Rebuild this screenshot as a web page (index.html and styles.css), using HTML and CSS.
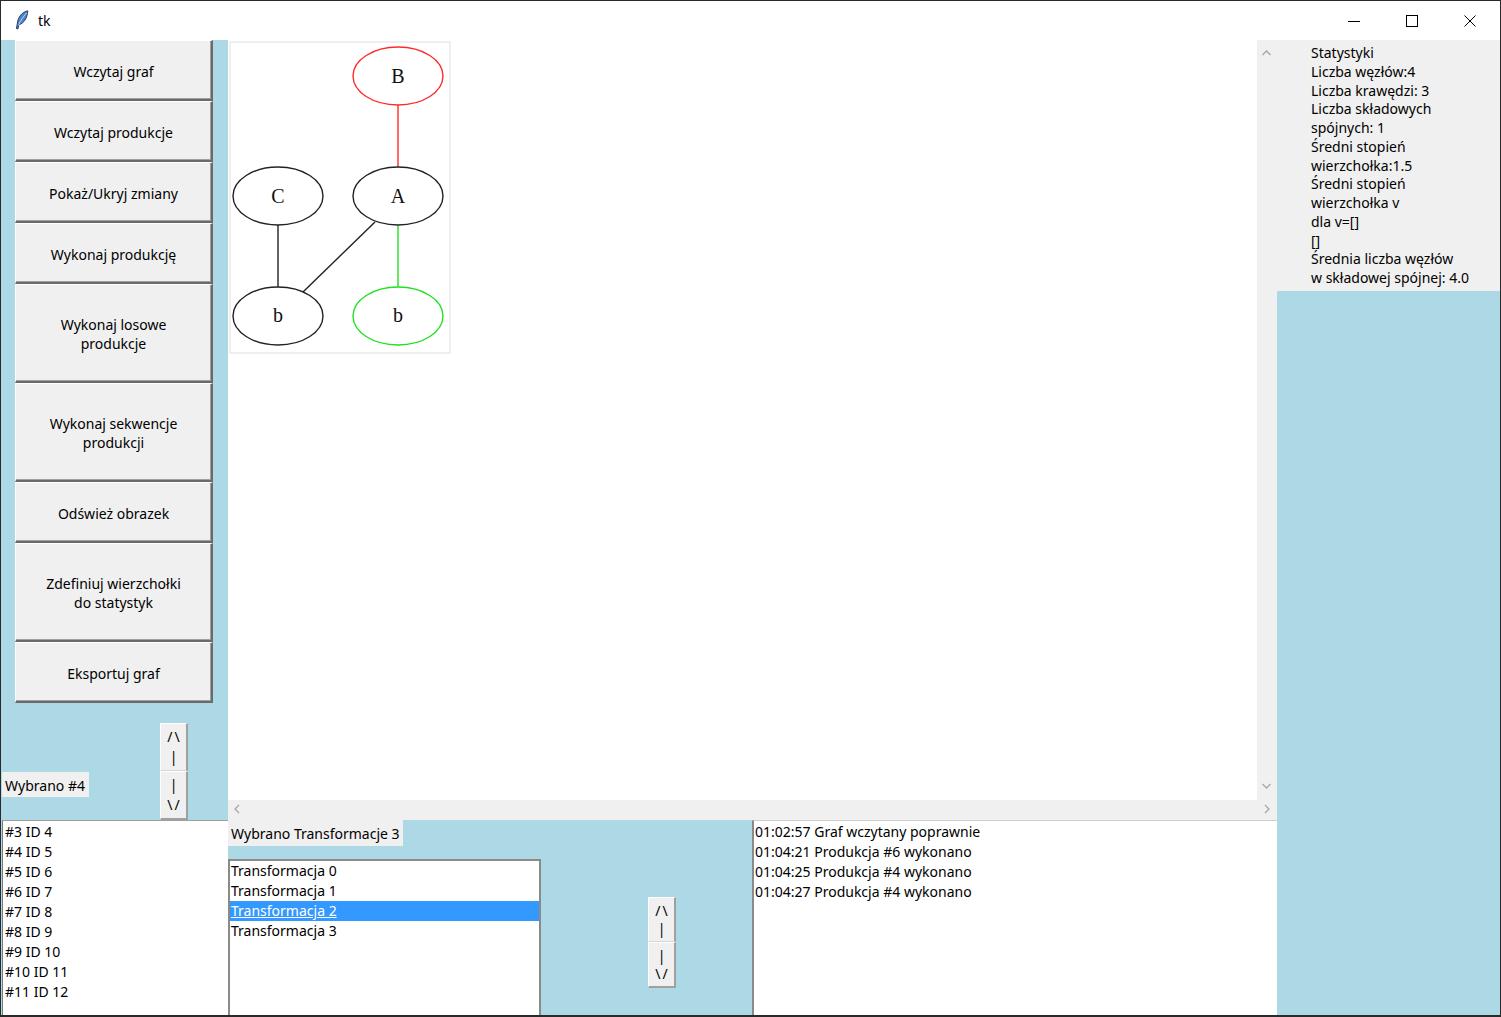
FILE: index.html
```html
<!DOCTYPE html>
<html lang="pl">
<head>
<meta charset="utf-8">
<title>tk</title>
<link rel="stylesheet" href="styles.css">
</head>
<body>
<div class="window">
  <div class="titlebar">
    <svg class="tk-icon" width="14" height="20" viewBox="0 0 14 20">
      <path d="M12.8 0.8 C7 2 3 7 2.4 13 L1.4 18.6 L3 18.9 L3.7 15 C9.2 13 12.4 8 12.8 0.8 Z" fill="#4a82cc" stroke="#23355a" stroke-width="0.9"/>
      <path d="M11.6 3 C8 7 5.5 10.5 3.4 15.5" fill="none" stroke="#d3e3f7" stroke-width="0.8"/>
    </svg>
    <span class="title">tk</span>
    <div class="controls">
      <svg class="ctl" width="58" height="40" viewBox="0 0 58 40"><path d="M23 20.5 H35" stroke="#000" stroke-width="1"/></svg>
      <svg class="ctl" width="58" height="40" viewBox="0 0 58 40"><rect x="23.5" y="14.5" width="11" height="11" fill="none" stroke="#000" stroke-width="1"/></svg>
      <svg class="ctl" width="58" height="40" viewBox="0 0 58 40"><path d="M23.5 14.5 L34.5 25.5 M34.5 14.5 L23.5 25.5" stroke="#000" stroke-width="1"/></svg>
    </div>
  </div>
  <div class="main">
    <div class="col-left">
      <div class="left-top">
        <div class="buttons">
          <div class="btn">Wczytaj graf</div>
          <div class="btn">Wczytaj produkcje</div>
          <div class="btn">Pokaż/Ukryj zmiany</div>
          <div class="btn">Wykonaj produkcję</div>
          <div class="btn tall">Wykonaj losowe<br>produkcje</div>
          <div class="btn tall">Wykonaj sekwencje<br>produkcji</div>
          <div class="btn">Odśwież obrazek</div>
          <div class="btn tall">Zdefiniuj wierzchołki<br>do statystyk</div>
          <div class="btn">Eksportuj graf</div>
        </div>
        <div class="left-ctrl">
          <div class="label label-left">Wybrano #4</div>
          <div class="spin spin-left">
            <div class="spin-btn"><span class="arr">/\</span><span>|</span></div>
            <div class="spin-btn"><span>|</span><span class="arr">\/</span></div>
          </div>
        </div>
      </div>
      <div class="listbox list-left">
        <div class="item">#3 ID 4</div>
        <div class="item">#4 ID 5</div>
        <div class="item">#5 ID 6</div>
        <div class="item">#6 ID 7</div>
        <div class="item">#7 ID 8</div>
        <div class="item">#8 ID 9</div>
        <div class="item">#9 ID 10</div>
        <div class="item">#10 ID 11</div>
        <div class="item">#11 ID 12</div>
      </div>
    </div>
    <div class="col-mid">
      <div class="canvas-area">
        <div class="canvas-row">
          <div class="canvas">
            <svg class="graph" width="222" height="313" viewBox="0 0 222 313">
              <rect x="1" y="1" width="220" height="311" fill="#fff" stroke="#efefef" stroke-width="2"/>
              <line x1="169" y1="64" x2="169" y2="126" stroke="#ff2a2a" stroke-width="1.4"/>
              <line x1="169" y1="184" x2="169" y2="246" stroke="#22e022" stroke-width="1.4"/>
              <line x1="49" y1="184" x2="49" y2="246" stroke="#222" stroke-width="1.4"/>
              <line x1="146" y1="181" x2="74" y2="251" stroke="#222" stroke-width="1.4"/>
              <ellipse cx="169" cy="35" rx="45" ry="29" fill="#fff" stroke="#ff2a2a" stroke-width="1.4"/>
              <ellipse cx="169" cy="155" rx="45" ry="29" fill="#fff" stroke="#222" stroke-width="1.4"/>
              <ellipse cx="49" cy="155" rx="45" ry="29" fill="#fff" stroke="#222" stroke-width="1.4"/>
              <ellipse cx="49" cy="275" rx="45" ry="29" fill="#fff" stroke="#222" stroke-width="1.4"/>
              <ellipse cx="169" cy="275" rx="45" ry="29" fill="#fff" stroke="#22e022" stroke-width="1.4"/>
              <text x="169" y="42" class="node">B</text>
              <text x="169" y="162" class="node">A</text>
              <text x="49" y="162" class="node">C</text>
              <text x="49" y="281" class="node">b</text>
              <text x="169" y="281" class="node">b</text>
            </svg>
          </div>
          <div class="vscroll">
            <svg width="20" height="20" viewBox="0 0 20 20"><path d="M5.5 14 L9.5 10 L13.5 14" fill="none" stroke="#a6a6a6" stroke-width="1.3"/></svg>
            <svg width="20" height="20" viewBox="0 0 20 20"><path d="M5.5 6 L9.5 10 L13.5 6" fill="none" stroke="#a6a6a6" stroke-width="1.3"/></svg>
          </div>
        </div>
        <div class="hscroll">
          <svg width="20" height="20" viewBox="0 0 20 20"><path d="M11 5 L7 9 L11 13" fill="none" stroke="#a6a6a6" stroke-width="1.3"/></svg>
          <svg width="20" height="20" viewBox="0 0 20 20"><path d="M8 5 L12 9 L8 13" fill="none" stroke="#a6a6a6" stroke-width="1.3"/></svg>
        </div>
      </div>
      <div class="mid-bottom">
        <div class="trans-panel">
          <div class="label label-trans">Wybrano Transformacje 3</div>
          <div class="trans-row">
            <div class="listbox list-trans">
              <div class="item">Transformacja 0</div>
              <div class="item">Transformacja 1</div>
              <div class="item selected">Transformacja 2</div>
              <div class="item">Transformacja 3</div>
            </div>
            <div class="spin spin-trans">
              <div class="spin-btn"><span class="arr">/\</span><span>|</span></div>
              <div class="spin-btn"><span>|</span><span class="arr">\/</span></div>
            </div>
          </div>
        </div>
        <div class="log">
          <div class="item">01:02:57 Graf wczytany poprawnie</div>
          <div class="item">01:04:21 Produkcja #6 wykonano</div>
          <div class="item">01:04:25 Produkcja #4 wykonano</div>
          <div class="item">01:04:27 Produkcja #4 wykonano</div>
        </div>
      </div>
    </div>
    <div class="col-right">
      <div class="stats">Statystyki<br>Liczba węzłów:4<br>Liczba krawędzi: 3<br>Liczba składowych<br>spójnych: 1<br>Średni stopień<br>wierzchołka:1.5<br>Średni stopień<br>wierzchołka v<br>dla v=[]<br>[]<br>Średnia liczba węzłów<br>w składowej spójnej: 4.0</div>
    </div>
  </div>
</div>
</body>
</html>
```
FILE: styles.css
```css
* { box-sizing: border-box; }
html, body { margin: 0; padding: 0; }
body {
  width: 1501px;
  height: 1017px;
  overflow: hidden;
  font-family: "Noto Sans", "Open Sans", sans-serif;
  font-size: 14px;
  color: #000;
  background: #fff;
}
.window {
  width: 1501px;
  height: 1017px;
  border: 1px solid #2a2a2a;
  border-bottom-width: 2px;
  display: flex;
  flex-direction: column;
}
.titlebar {
  height: 39px;
  background: #fff;
  display: flex;
  align-items: center;
  flex-shrink: 0;
}
.tk-icon { margin-left: 14px; margin-top: -1px; }
.title { margin-left: 9px; font-size: 14px; margin-top: -1px; }
.controls { margin-left: auto; display: flex; margin-right: 1px; }
.ctl { display: block; }

.main {
  height: 975px;
  display: flex;
  background: #add8e6;
}
.col-left { width: 227px; display: flex; flex-direction: column; }
.left-top { height: 780px; display: flex; flex-direction: column; }
.buttons { padding-left: 14px; display: flex; flex-direction: column; }
.btn {
  width: 198px;
  height: 61px;
  background: #f0f0f0;
  border-top: 1px solid #ffffff;
  border-left: 1px solid #ffffff;
  border-right: 2px solid #6a6a6a;
  border-bottom: 2px solid #6a6a6a;
  box-shadow: inset -1px -1px 0 #a0a0a0;
  display: flex;
  align-items: center;
  justify-content: center;
  text-align: center;
  line-height: 19px;
  padding-top: 2px;
}
.btn.tall { height: 99px; }

.left-ctrl { height: 117px; display: flex; align-items: flex-start; }
.label {
  background: #f0f0f0;
  height: 26px;
  display: flex;
  align-items: center;
  padding: 0 3px;
  white-space: nowrap;
}
.label-left { margin-left: 1px; margin-top: 69px; width: 87px; height: 25px; padding-top: 1px; }
.spin { display: flex; flex-direction: column; width: 28px; }
.spin-left { margin-left: 71px; margin-top: 20px; height: 97px; }
.spin-btn {
  flex: 1;
  background: #f0f0f0;
  border-top: 1px solid #fff;
  border-left: 1px solid #fff;
  border-right: 2px solid #a0a0a0;
  border-bottom: 1px solid #d6d6d6;
  display: flex;
  flex-direction: column;
  align-items: center;
  justify-content: center;
  line-height: 20px;
  font-size: 14px;
}
.spin-btn:last-child { border-bottom: 2px solid #a0a0a0; }
.arr { letter-spacing: 2px; margin-right: -2px; }

.listbox { background: #fff; }
.item { height: 20px; line-height: 20px; white-space: nowrap; }
.list-left {
  height: 195px;
  margin-left: 1px;
  border-top: 1px solid #a0a0a0;
  border-left: 1px solid #7a7a7a;
  padding: 1px 0 0 2px;
}

.col-mid { width: 1049px; display: flex; flex-direction: column; }
.canvas-area { height: 780px; display: flex; flex-direction: column; }
.canvas-row { height: 760px; display: flex; }
.canvas { width: 1029px; background: #fff; padding: 1px 0 0 1px; }
.graph { display: block; }
.node { font-family: "Liberation Serif", "DejaVu Serif", serif; font-size: 20px; text-anchor: middle; fill: #111; }
.vscroll {
  width: 20px;
  background: #f0f0f0;
  display: flex;
  flex-direction: column;
  justify-content: space-between;
  padding: 1px 0 2px 0;
}
.vscroll svg, .hscroll svg { display: block; }
.hscroll {
  height: 20px;
  background: #f0f0f0;
  display: flex;
  justify-content: space-between;
}

.mid-bottom { height: 195px; display: flex; }
.trans-panel { width: 524px; display: flex; flex-direction: column; }
.label-trans { width: 175px; padding-left: 3px; }
.trans-row { display: flex; margin-top: 13px; align-items: flex-start; }
.list-trans {
  width: 313px;
  height: 156px;
  border: 2px solid #8a8a8a;
  border-bottom: 0;
  padding: 0;
}
.list-trans .item { padding-left: 1px; }
.list-trans .selected {
  background: #3399ff;
  color: #fff;
  text-decoration: underline;
}
.spin-trans { margin-left: 107px; margin-top: 38px; height: 91px; }
.spin-trans .spin-btn { line-height: 18px; }

.log {
  width: 525px;
  background: #fff;
  border-left: 2px solid #8a8a8a;
  border-top: 1px solid #cfcfcf;
  padding: 1px 0 0 1px;
}

.col-right { width: 223px; }
.stats {
  height: 251px;
  background: #f0f0f0;
  padding: 4px 0 0 34px;
  line-height: 18.75px;
  white-space: nowrap;
}
```
